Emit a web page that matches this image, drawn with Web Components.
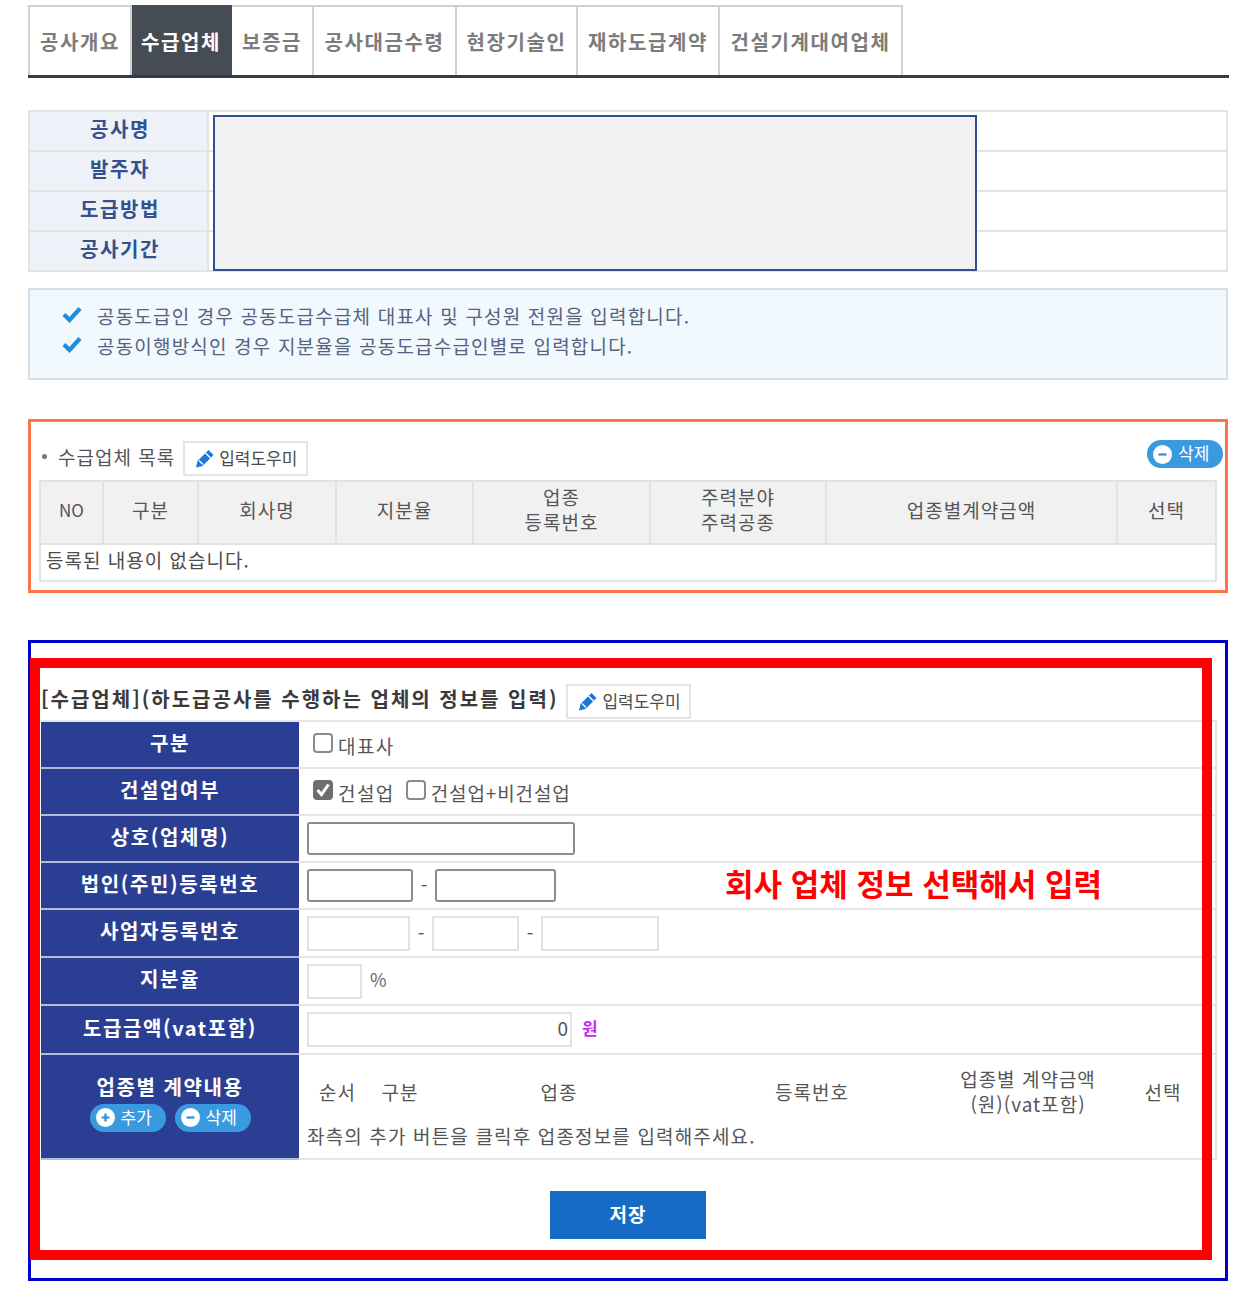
<!DOCTYPE html>
<html lang="ko">
<head>
<meta charset="utf-8">
<title>수급업체</title>
<style>
  html, body { margin: 0; padding: 0; background: #fff; }
  body { font-family: "Noto Sans CJK KR", "Liberation Sans", sans-serif; color: #555; font-size: 19px; }
  .page { width: 1201px; padding: 5px 0 0 28px; }
</style>
</head>
<body>
<div class="page">
  <tab-bar></tab-bar>
  <info-table></info-table>
  <notice-box>
    <notice-line>공동도급인 경우 공동도급수급체 대표사 및 구성원 전원을 입력합니다.</notice-line>
    <notice-line>공동이행방식인 경우 지분율을 공동도급수급인별로 입력합니다.</notice-line>
  </notice-box>
  <list-panel></list-panel>
  <form-panel>
    <form-row label="구분" h="47"><form-check>대표사</form-check></form-row>
    <form-row label="건설업여부" h="47"><form-check checked>건설업</form-check><form-check gap="11" tight>건설업+비건설업</form-check></form-row>
    <form-row label="상호(업체명)" h="47"><text-field w="268" strong></text-field></form-row>
    <form-row label="법인(주민)등록번호" h="47">
      <text-field w="106" strong></text-field><field-dash w="22">-</field-dash><text-field w="121" strong></text-field>
      <red-note>회사 업체 정보 선택해서 입력</red-note>
    </form-row>
    <form-row label="사업자등록번호" h="48">
      <text-field w="103"></text-field><field-dash w="22">-</field-dash><text-field w="87"></text-field><field-dash w="22">-</field-dash><text-field w="118"></text-field>
    </form-row>
    <form-row label="지분율" h="48"><text-field w="55"></text-field><field-unit>%</field-unit></form-row>
    <form-row label="도급금액(vat포함)" h="49"><text-field w="265" value="0"></text-field><field-unit won>원</field-unit></form-row>
    <form-row label="업종별 계약내용" h="105" tall>
      <pill-button slot="actions" kind="plus">추가</pill-button>
      <pill-button slot="actions" kind="minus">삭제</pill-button>
      <contract-list></contract-list>
    </form-row>
  </form-panel>
</div>

<script>
const TABS = [
  ['공사개요', 104], ['수급업체', 100], ['보증금', 82], ['공사대금수령', 143],
  ['현장기술인', 121], ['재하도급계약', 142], ['건설기계대여업체', 183]
];

class TabBar extends HTMLElement {
  constructor() {
    super();
    this.attachShadow({ mode: 'open' });
  }
  connectedCallback() {
    const items = TABS.map(([name, w], i) =>
      `<div class="tab ${i === 1 ? 'on' : ''}" style="width:${w}px">${name}</div>`).join('');
    this.shadowRoot.innerHTML = `
      <style>
        :host { display: block; width: 1201px; border-bottom: 3px solid #333c4b; height: 70px; }
        .tabs { display: flex; height: 70px; }
        .tab {
          box-sizing: border-box; display: flex; align-items: center; justify-content: center;
          border: 2px solid #cfcfcf; border-bottom: 0; border-left-width: 0;
          font: 700 20px "Noto Sans CJK KR", sans-serif; letter-spacing: 1.6px; color: #7c7c7c;
          white-space: nowrap;
        }
        .tab:first-child { border-left-width: 2px; }
        .tab.on { background: #464c54; color: #fff; border-color: #464c54; }
      </style>
      <div class="tabs">${items}</div>`;
  }
}
customElements.define('tab-bar', TabBar);

class InfoTable extends HTMLElement {
  constructor() {
    super();
    this.attachShadow({ mode: 'open' });
  }
  connectedCallback() {
    const rows = ['공사명', '발주자', '도급방법', '공사기간'];
    this.shadowRoot.innerHTML = `
      <style>
        :host { display: block; position: relative; width: 1200px; margin-top: 32px; }
        .row { display: grid; grid-template-columns: 179px 1fr; box-sizing: border-box; height: 40px; border-bottom: 2px solid #e3e3e3; }
        .wrap { border: 2px solid #e3e3e3; border-bottom: 0; }
        .th {
          background: #eef2f8; border-right: 2px solid #e3e3e3; display: flex; align-items: center; justify-content: center;
          font: 700 20px "Noto Sans CJK KR", sans-serif; letter-spacing: 1.6px; color: #33508f; padding: 0 0 5px 3px;
        }
        .mask {
          position: absolute; left: 185px; top: 5px; width: 764px; height: 156px; box-sizing: border-box;
          background: #f1f1f1; border: 2px solid #2f5090;
        }
      </style>
      <div class="wrap">
        ${rows.map(t => `<div class="row"><div class="th">${t}</div><div></div></div>`).join('')}
      </div>
      <div class="mask"></div>`;
  }
}
customElements.define('info-table', InfoTable);

class NoticeBox extends HTMLElement {
  constructor() {
    super();
    this.attachShadow({ mode: 'open' });
    this.shadowRoot.innerHTML = `
      <style>
        :host {
          display: block; box-sizing: border-box; width: 1200px; height: 92px; margin-top: 16px;
          background: #f1f8fe; border: 2px solid #d5dfe8; padding: 10px 0 0 32px;
        }
      </style>
      <slot></slot>`;
  }
}
customElements.define('notice-box', NoticeBox);

class NoticeLine extends HTMLElement {
  constructor() {
    super();
    this.attachShadow({ mode: 'open' });
    this.shadowRoot.innerHTML = `
      <style>
        :host {
          display: flex; align-items: center; height: 30px;
          font: 400 19px "Noto Sans CJK KR", sans-serif; letter-spacing: 1.18px; color: #55637e; white-space: nowrap;
        }
        svg { width: 20px; height: 18px; margin: -2px 15px 0 0; flex: none; }
      </style>
      <svg viewBox="0 0 20 18"><path d="M2 9.5 L7.5 15 L18 3.5" fill="none" stroke="#1b8fdc" stroke-width="4.2"/></svg>
      <slot></slot>`;
  }
}
customElements.define('notice-line', NoticeLine);

class HelpButton extends HTMLElement {
  constructor() {
    super();
    this.attachShadow({ mode: 'open' });
    this.shadowRoot.innerHTML = `
      <style>
        :host {
          display: inline-flex; align-items: center; box-sizing: border-box; width: 125px; height: 35px;
          border: 2px solid #e4e4e4; padding-left: 9px; background: #fff;
          font: 400 17px "Noto Sans CJK KR", sans-serif; color: #4c4c4c; white-space: nowrap;
        }
        svg { width: 21px; height: 21px; margin-right: 4px; flex: none; }
        span { margin-top: -3px; }
      </style>
      <svg viewBox="0 0 21 21">
        <path d="M2 19.5 L3.5 13 L14.5 2 L19.5 7 L8.5 18 Z" fill="#1a78dc"/>
        <path d="M11.5 5 L16.5 10" stroke="#fff" stroke-width="1.4"/>
        <path d="M5 12.5 L9 16.5" stroke="#fff" stroke-width="1.3"/>
      </svg>
      <span><slot></slot></span>`;
  }
}
customElements.define('help-button', HelpButton);

class PillButton extends HTMLElement {
  constructor() {
    super();
    this.attachShadow({ mode: 'open' });
  }
  connectedCallback() {
    const plus = this.getAttribute('kind') === 'plus';
    this.shadowRoot.innerHTML = `
      <style>
        :host {
          display: inline-flex; align-items: center; box-sizing: border-box; width: 76px; height: 28px;
          background: #3a9ae0; border-radius: 14px; padding-left: 6px; color: #fff;
          font: 400 17px "Noto Sans CJK KR", sans-serif; white-space: nowrap;
        }
        svg { width: 19px; height: 19px; margin-right: 6px; flex: none; }
        span { margin-top: -3px; }
      </style>
      <svg viewBox="0 0 19 19">
        <circle cx="9.5" cy="9.5" r="9.5" fill="#fff"/>
        <path d="${plus ? 'M5.5 9.5 H13.5 M9.5 5.5 V13.5' : 'M5.5 9.5 H13.5'}" stroke="#2f8bd4" stroke-width="2.2"/>
      </svg>
      <span><slot></slot></span>`;
  }
}
customElements.define('pill-button', PillButton);

class ListPanel extends HTMLElement {
  constructor() {
    super();
    this.attachShadow({ mode: 'open' });
  }
  connectedCallback() {
    const heads = ['NO', '구분', '회사명', '지분율', '업종<br>등록번호', '주력분야<br>주력공종', '업종별계약금액', '선택'];
    const widths = [63, 95, 138, 137, 177, 176, 291, 99];
    this.shadowRoot.innerHTML = `
      <style>
        :host {
          display: block; box-sizing: border-box; width: 1200px; height: 174px; margin-top: 39px;
          border: 3px solid #ff7349; padding: 0 8px;
          font: 400 19px "Noto Sans CJK KR", sans-serif; letter-spacing: 1px; color: #555;
        }
        .top { display: flex; align-items: flex-start; height: 58px; padding-top: 19px; box-sizing: border-box; }
        .title { display: flex; align-items: center; height: 30px; white-space: nowrap; margin-right: 8px; padding-left: 3px; }
        .dot { width: 5px; height: 5px; border-radius: 50%; background: #777; margin-right: 11px; }
        pill-button { margin-left: auto; margin-right: -6px; margin-top: -1px; letter-spacing: 0; }
        help-button { letter-spacing: 0; }
        table { border-collapse: collapse; table-layout: fixed; width: 1176px; }
        th, td { border: 2px solid #e2e2e2; padding: 0; }
        th { background: #f1f1f1; height: 63px; font-weight: 400; line-height: 25px; padding-bottom: 7px; box-sizing: border-box; }
        th.no { font-size: 17px; letter-spacing: 0; }
        td { height: 37px; padding: 0 0 7px 5px; color: #4c4c4c; box-sizing: border-box; }
      </style>
      <div class="top">
        <div class="title"><span class="dot"></span>수급업체 목록</div>
        <help-button>입력도우미</help-button>
        <pill-button kind="minus">삭제</pill-button>
      </div>
      <table>
        <colgroup>${widths.map(w => `<col style="width:${w}px">`).join('')}</colgroup>
        <tr>${heads.map((h, i) => `<th class="${i === 0 ? 'no' : ''}">${h}</th>`).join('')}</tr>
        <tr><td colspan="8">등록된 내용이 없습니다.</td></tr>
      </table>`;
  }
}
customElements.define('list-panel', ListPanel);

class FormPanel extends HTMLElement {
  constructor() {
    super();
    this.attachShadow({ mode: 'open' });
    this.shadowRoot.innerHTML = `
      <style>
        :host {
          display: block; position: relative; box-sizing: border-box; width: 1200px; height: 641px; margin-top: 47px;
          border: 3px solid #0000cd; padding: 41px 8px 0 10px;
        }
        .head { display: flex; align-items: flex-start; height: 37px; }
        .title {
          font: 700 20px "Noto Sans CJK KR", sans-serif; letter-spacing: 2px; color: #3a3a3a;
          white-space: nowrap; margin-right: 8px; height: 30px; line-height: 30px;
        }
        .rows { border-top: 2px solid #e5e5e5; border-right: 2px solid #e5e5e5; margin-top: -1px; }
        .foot { display: flex; justify-content: center; margin-top: 31px; padding-right: 2px; }
        button {
          width: 156px; height: 48px; background: #156bc5; color: #fff; border: 0; padding: 0 0 3px;
          font: 700 19px "Noto Sans CJK KR", sans-serif; letter-spacing: 1px;
        }
        .red {
          position: absolute; left: -1px; top: 15px; width: 1182px; height: 602px; box-sizing: border-box;
          border: 10px solid #ff0000; pointer-events: none;
        }
      </style>
      <div class="head">
        <div class="title">[수급업체](하도급공사를 수행하는 업체의 정보를 입력)</div>
        <help-button>입력도우미</help-button>
      </div>
      <div class="rows"><slot></slot></div>
      <div class="foot"><button type="button">저장</button></div>
      <div class="red"></div>`;
  }
}
customElements.define('form-panel', FormPanel);

class FormRow extends HTMLElement {
  constructor() {
    super();
    this.attachShadow({ mode: 'open' });
  }
  connectedCallback() {
    const tall = this.hasAttribute('tall');
    this.shadowRoot.innerHTML = `
      <style>
        :host {
          display: grid; grid-template-columns: 258px 1fr; box-sizing: border-box; height: ${this.getAttribute('h')}px;
          font: 400 19px "Noto Sans CJK KR", sans-serif; letter-spacing: 1px; color: #555;
        }
        .th {
          background: #2a3f93; color: #fff; border-bottom: 2px solid #b3bbd6; display: flex; flex-direction: column;
          align-items: center; justify-content: center; padding-bottom: ${tall ? 10 : 5}px;
          font-size: 20px; font-weight: 700; letter-spacing: 1.6px; white-space: nowrap;
        }
        .btns { display: flex; gap: 9px; margin-top: 3px; letter-spacing: 0; font-weight: 400; }
        .td {
          border-bottom: 2px solid #e5e5e5; display: flex; align-items: center; padding-left: 8px; white-space: nowrap;
          ${tall ? 'align-items: flex-start;' : ''}
        }
      </style>
      <div class="th"><span>${this.getAttribute('label')}</span>${tall ? '<div class="btns"><slot name="actions"></slot></div>' : ''}</div>
      <div class="td"><slot></slot></div>`;
  }
}
customElements.define('form-row', FormRow);

class FormCheck extends HTMLElement {
  constructor() {
    super();
    this.attachShadow({ mode: 'open' });
  }
  connectedCallback() {
    const on = this.hasAttribute('checked');
    const gap = this.getAttribute('gap') || 6;
    const ls = this.hasAttribute('tight') ? 0.9 : 1.4;
    this.shadowRoot.innerHTML = `
      <style>
        :host { display: inline-flex; align-items: center; margin-left: ${gap}px; letter-spacing: ${ls}px; color: #555; padding-top: 2px; }
        .box {
          box-sizing: border-box; width: 20px; height: 20px; border: 2px solid ${on ? '#6f6f6f' : '#8b8b8b'}; border-radius: 4px;
          margin-right: 5px; margin-top: -6px; background: ${on ? '#6f6f6f' : '#fff'}; display: block;
        }
        svg { display: block; width: 16px; height: 16px; }
      </style>
      <span class="box">${on ? '<svg viewBox="0 0 16 16"><path d="M2.5 8 L6.5 12.5 L13.5 2.5" fill="none" stroke="#fff" stroke-width="3"/></svg>' : ''}</span>
      <slot></slot>`;
  }
}
customElements.define('form-check', FormCheck);

class TextField extends HTMLElement {
  constructor() {
    super();
    this.attachShadow({ mode: 'open' });
  }
  connectedCallback() {
    const strong = this.hasAttribute('strong');
    const value = this.getAttribute('value');
    this.shadowRoot.innerHTML = `
      <style>
        :host {
          display: flex; align-items: center; justify-content: flex-end; box-sizing: border-box;
          width: ${this.getAttribute('w')}px; height: ${strong ? 33 : 35}px; flex: none;
          border: 2px solid ${strong ? '#8c8c8c' : '#e2e2e2'}; border-radius: ${strong ? 3 : 0}px; background: #fff;
          padding-right: 2px; color: #555; letter-spacing: 0;
        }
        span { margin-top: -4px; }
      </style>
      <span>${value === null ? '' : value}</span>`;
  }
}
customElements.define('text-field', TextField);

class FieldDash extends HTMLElement {
  constructor() {
    super();
    this.attachShadow({ mode: 'open' });
  }
  connectedCallback() {
    this.shadowRoot.innerHTML = `
      <style>:host { display: inline-block; width: ${this.getAttribute('w')}px; text-align: center; letter-spacing: 0; margin-top: -2px; }</style>
      <slot></slot>`;
  }
}
customElements.define('field-dash', FieldDash);

class FieldUnit extends HTMLElement {
  constructor() {
    super();
    this.attachShadow({ mode: 'open' });
  }
  connectedCallback() {
    const won = this.hasAttribute('won');
    this.shadowRoot.innerHTML = `
      <style>
        :host {
          display: inline-block; margin-left: ${won ? 10 : 8}px; margin-top: -4px;
          color: ${won ? '#c22cf2' : '#666'}; font-weight: ${won ? 700 : 400}; font-size: ${won ? 17 : 18}px; letter-spacing: 0;
        }
      </style>
      <slot></slot>`;
  }
}
customElements.define('field-unit', FieldUnit);

class RedNote extends HTMLElement {
  constructor() {
    super();
    this.attachShadow({ mode: 'open' });
    this.shadowRoot.innerHTML = `
      <style>
        :host {
          display: inline-block; margin-left: 169px; color: #ff0000; letter-spacing: 0;
          font: 700 31px "Noto Sans CJK KR", sans-serif; line-height: 40px; white-space: nowrap; margin-top: -6px;
        }
      </style>
      <slot></slot>`;
  }
}
customElements.define('red-note', RedNote);

class ContractList extends HTMLElement {
  constructor() {
    super();
    this.attachShadow({ mode: 'open' });
    this.shadowRoot.innerHTML = `
      <style>
        :host { display: block; width: 909px; }
        .head {
          display: grid; grid-template-columns: 61px 64px 254px 252px 180px 90px; height: 62px; margin-top: 5px;
          align-items: center; text-align: center; line-height: 25px;
        }
        .msg { height: 30px; line-height: 30px; letter-spacing: 1.15px; margin-top: -1px; }
      </style>
      <div class="head">
        <span>순서</span><span>구분</span><span>업종</span><span>등록번호</span><span>업종별 계약금액<br>(원)(vat포함)</span><span>선택</span>
      </div>
      <div class="msg">좌측의 추가 버튼을 클릭후 업종정보를 입력해주세요.</div>`;
  }
}
customElements.define('contract-list', ContractList);
</script>
</body>
</html>
